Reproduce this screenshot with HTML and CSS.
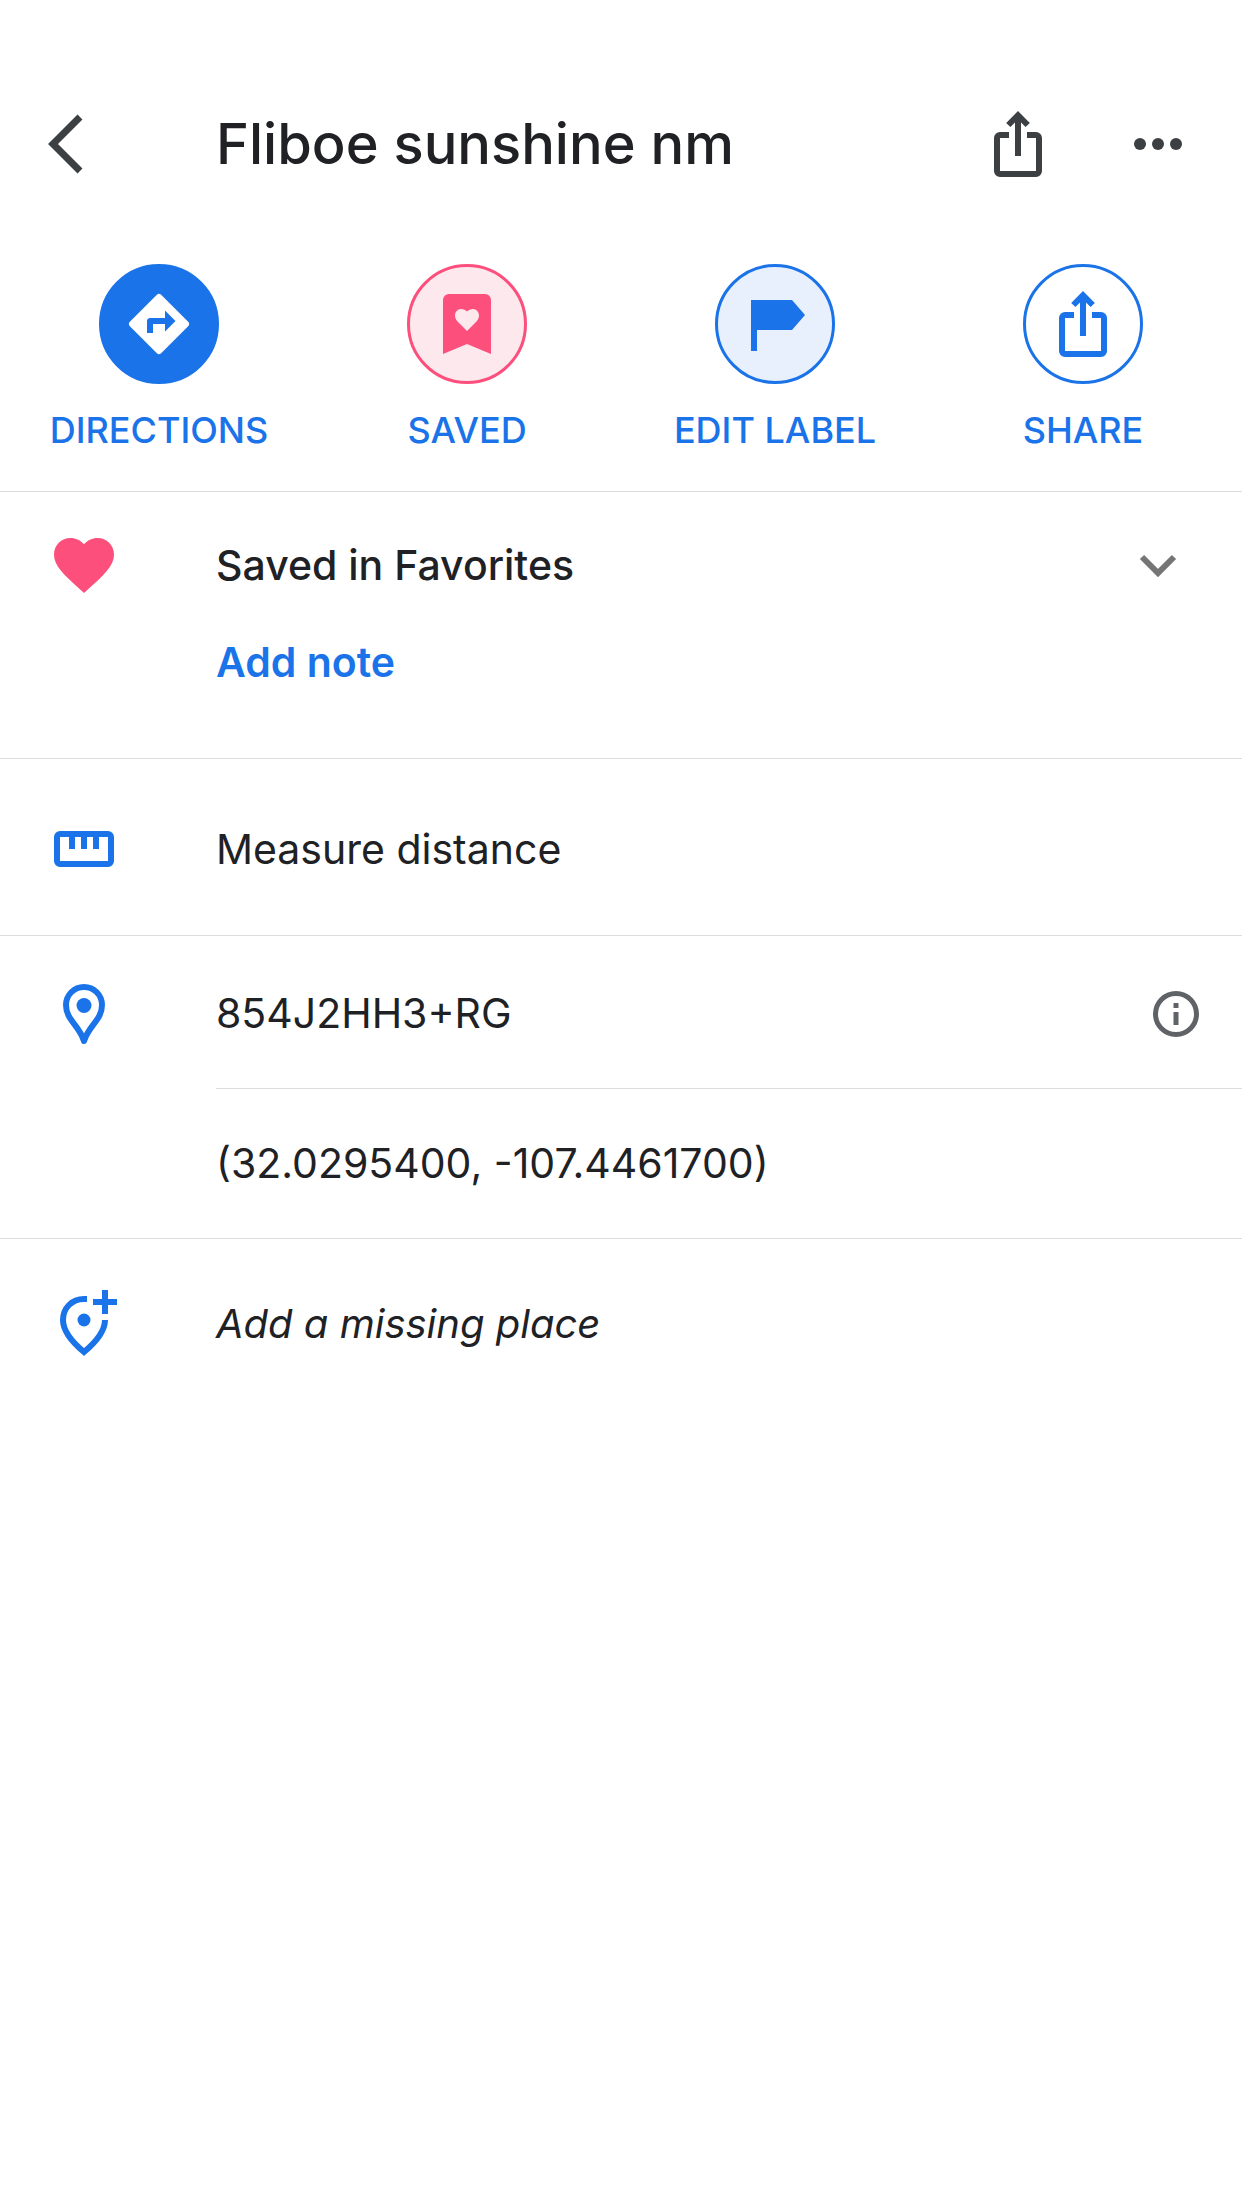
FILE: index.html
```html
<!DOCTYPE html>
<html lang="en">
<head>
<meta charset="utf-8">
<meta name="viewport" content="width=device-width, initial-scale=1">
<title>Fliboe sunshine nm</title>
<link rel="stylesheet" href="styles.css">
</head>
<body>
<svg class="sprite" aria-hidden="true">
  <symbol id="share" viewBox="0 0 72 72">
    <path d="M27 27H18a3 3 0 0 0-3 3v33a3 3 0 0 0 3 3h36a3 3 0 0 0 3-3V30a3 3 0 0 0-3-3h-9M36 48V8M26.300 17 36 7.300 45.700 17" fill="none" stroke="currentColor" stroke-width="6"/>
  </symbol>
</svg>

<header class="topbar">
  <button class="icon-button" aria-label="Back">
    <svg class="icon" viewBox="0 0 72 72"><path d="M44 9 17 36l27 27" fill="none" stroke="currentColor" stroke-width="7"/></svg>
  </button>
  <h1 class="title">Fliboe sunshine nm</h1>
  <button class="icon-button" aria-label="Share place">
    <svg class="icon" viewBox="0 0 72 72"><use href="#share"/></svg>
  </button>
  <button class="icon-button" aria-label="More options">
    <svg class="icon" viewBox="0 0 72 72" fill="currentColor"><circle cx="18" cy="36" r="6"/><circle cx="36" cy="36" r="6"/><circle cx="54" cy="36" r="6"/></svg>
  </button>
</header>

<main>
  <nav class="actions" aria-label="Place actions">
    <button class="action">
      <span class="disc disc-filled"><svg class="icon" viewBox="0 0 24 24" fill="currentColor"><path d="m21.71 11.29-9-9a1 1 0 0 0-1.42 0l-9 9a1 1 0 0 0 0 1.42l9 9a1 1 0 0 0 1.42 0l9-9a1 1 0 0 0 0-1.42zM14 14.5V12h-4v3H8v-4c0-.55.45-1 1-1h5V7.5l3.5 3.5-3.5 3.5z"/></svg></span>
      <span class="action-label">DIRECTIONS</span>
    </button>
    <button class="action">
      <span class="disc disc-saved"><svg class="icon" viewBox="0 0 72 72"><path d="M12 66V12a6 6 0 0 1 6-6h36a6 6 0 0 1 6 6v54L36 56z" fill="currentColor"/><path d="M36 43 28 35c-2.500-2.500-4-4.500-4-7.500C24 24 26.500 21 30 21c2.500 0 4.500 1 6 2.500 1.500-1.500 3.500-2.500 6-2.500 3.500 0 6 3 6 6.500 0 3-1.500 5-4 7.500z" fill="#fce8ed"/></svg></span>
      <span class="action-label">SAVED</span>
    </button>
    <button class="action">
      <span class="disc disc-label"><svg class="icon" viewBox="0 0 72 72"><path d="M12 12h41l13 15-13 15H18v21h-6z" fill="currentColor"/></svg></span>
      <span class="action-label">EDIT LABEL</span>
    </button>
    <button class="action">
      <span class="disc"><svg class="icon" viewBox="0 0 72 72"><use href="#share"/></svg></span>
      <span class="action-label">SHARE</span>
    </button>
  </nav>

  <section class="row favorites">
    <svg class="icon pink" viewBox="0 0 24 24" fill="currentColor" aria-hidden="true"><path d="M12 21.350l-1.450-1.320C5.400 15.360 2 12.280 2 8.500 2 5.420 4.420 3 7.500 3c1.740 0 3.410.810 4.500 2.090C13.090 3.810 14.760 3 16.500 3 19.580 3 22 5.420 22 8.500c0 3.780-3.400 6.860-8.550 11.540z"/></svg>
    <h2 class="row-text strong">Saved in Favorites</h2>
    <button class="icon-button muted" aria-label="Show lists">
      <svg class="icon" viewBox="0 0 72 72"><path d="m20 28 16 16 16-16" fill="none" stroke="currentColor" stroke-width="6"/></svg>
    </button>
    <button class="row-text note">Add note</button>
  </section>

  <button class="row measure">
    <svg class="icon blue" viewBox="0 0 72 72" aria-hidden="true"><path d="M12 18h48a6 6 0 0 1 6 6v24a6 6 0 0 1-6 6H12a6 6 0 0 1-6-6V24a6 6 0 0 1 6-6zm0 6v24h48V24h-9v12h-6V24h-6v12h-6V24h-6v12h-6V24z" fill="currentColor"/></svg>
    <span class="row-text">Measure distance</span>
  </button>

  <section class="place">
    <div class="row code">
      <svg class="icon blue" viewBox="0 0 72 72" aria-hidden="true"><path d="M36 10c-10 0-18 8-18 18 0 15 13 20 18 36 5-16 18-21 18-36 0-10-8-18-18-18z" fill="none" stroke="currentColor" stroke-width="6" stroke-linejoin="round"/><circle cx="36" cy="28.500" r="7.500" fill="currentColor"/></svg>
      <span class="row-text">854J2HH3+RG</span>
      <button class="icon-button info" aria-label="About plus codes">
        <svg class="icon" viewBox="0 0 72 72"><circle cx="36" cy="37" r="20.500" fill="none" stroke="currentColor" stroke-width="5"/><path d="M33.500 26h5v5h-5zM33.500 35h5v13h-5z" fill="currentColor"/></svg>
      </button>
    </div>
    <div class="coordinates row-text">(32.0295400, -107.4461700)</div>
  </section>

  <button class="row missing">
    <svg class="icon blue" viewBox="0 0 72 72" aria-hidden="true"><path d="M39 11h-3c-12 0-21 9-21 21 0 11 9 22 21 32 12-10 21-21 21-32" fill="none" stroke="currentColor" stroke-width="6"/><circle cx="36" cy="32" r="6.500" fill="currentColor"/><path d="M54 2h6v9h9v6h-9v9h-6v-9h-9v-6h9z" fill="currentColor"/></svg>
    <em class="row-text">Add a missing place</em>
  </button>
</main>
</body>
</html>
```
FILE: styles.css
```css
* {
  box-sizing: border-box;
}

body {
  margin: 0;
  background: #fff;
  color: #202124;
  font-family: Inter, Roboto, sans-serif;
  font-size: 41px;
  line-height: 48px;
}

button {
  padding: 0;
  border: 0;
  background: none;
  color: inherit;
  font: inherit;
  text-align: left;
  cursor: pointer;
}

.sprite {
  display: none;
}

.icon {
  display: block;
  flex: none;
  width: 72px;
  height: 72px;
}

.icon-button {
  flex: none;
  color: #3c4043;
}

.blue {
  color: #1a73e8;
}

.pink {
  color: #fc4f7c;
}

.topbar {
  display: flex;
  align-items: center;
  gap: 68px;
  padding: 84px 48px 0 36px;
  height: 204px;
}

.title {
  flex: 1;
  margin: 0 0 0 40px;
  font-size: 56px;
  font-weight: 500;
  line-height: 72px;
}

.actions {
  display: grid;
  grid-template-columns: repeat(4, 1fr);
  padding: 60px 5px 37px;
  border-bottom: 1px solid #dadce0;
}

.action {
  display: flex;
  flex-direction: column;
  align-items: center;
  gap: 22px;
  color: #1a73e8;
}

.action-label {
  font-size: 36px;
  font-weight: 500;
}

.disc {
  display: grid;
  place-items: center;
  width: 120px;
  height: 120px;
  border: 3px solid #1a73e8;
  border-radius: 50%;
}

.disc-filled {
  background: #1a73e8;
  color: #fff;
}

.disc-saved {
  border-color: #fc4f7c;
  background: #fce8ed;
  color: #fc4f7c;
}

.disc-label {
  background: #e8f0fe;
}

.row {
  display: grid;
  grid-template-columns: 72px 1fr auto;
  column-gap: 96px;
  align-items: center;
  width: 100%;
  padding: 0 48px;
}

.row-text {
  margin: 0;
  font-size: 41px;
  font-weight: 400;
}

.row-text.strong {
  font-weight: 500;
}

.favorites {
  row-gap: 37px;
  padding-top: 37px;
  padding-bottom: 72px;
  border-bottom: 1px solid #dadce0;
}

.muted {
  color: #757575;
}

.row-text.note {
  grid-column: 2;
  color: #1a73e8;
  font-weight: 600;
}

.measure {
  padding-top: 54px;
  padding-bottom: 50px;
  border-bottom: 1px solid #dadce0;
}

.place {
  border-bottom: 1px solid #dadce0;
}

.code {
  padding: 41px 30px 39px 48px;
}

.info {
  color: #5f6368;
}

.coordinates {
  margin-left: 216px;
  padding: 50px 0 51px;
  border-top: 1px solid #dadce0;
}

.missing {
  padding-top: 49px;
  padding-bottom: 49px;
}

.missing .row-text {
  font-size: 40px;
}
```
